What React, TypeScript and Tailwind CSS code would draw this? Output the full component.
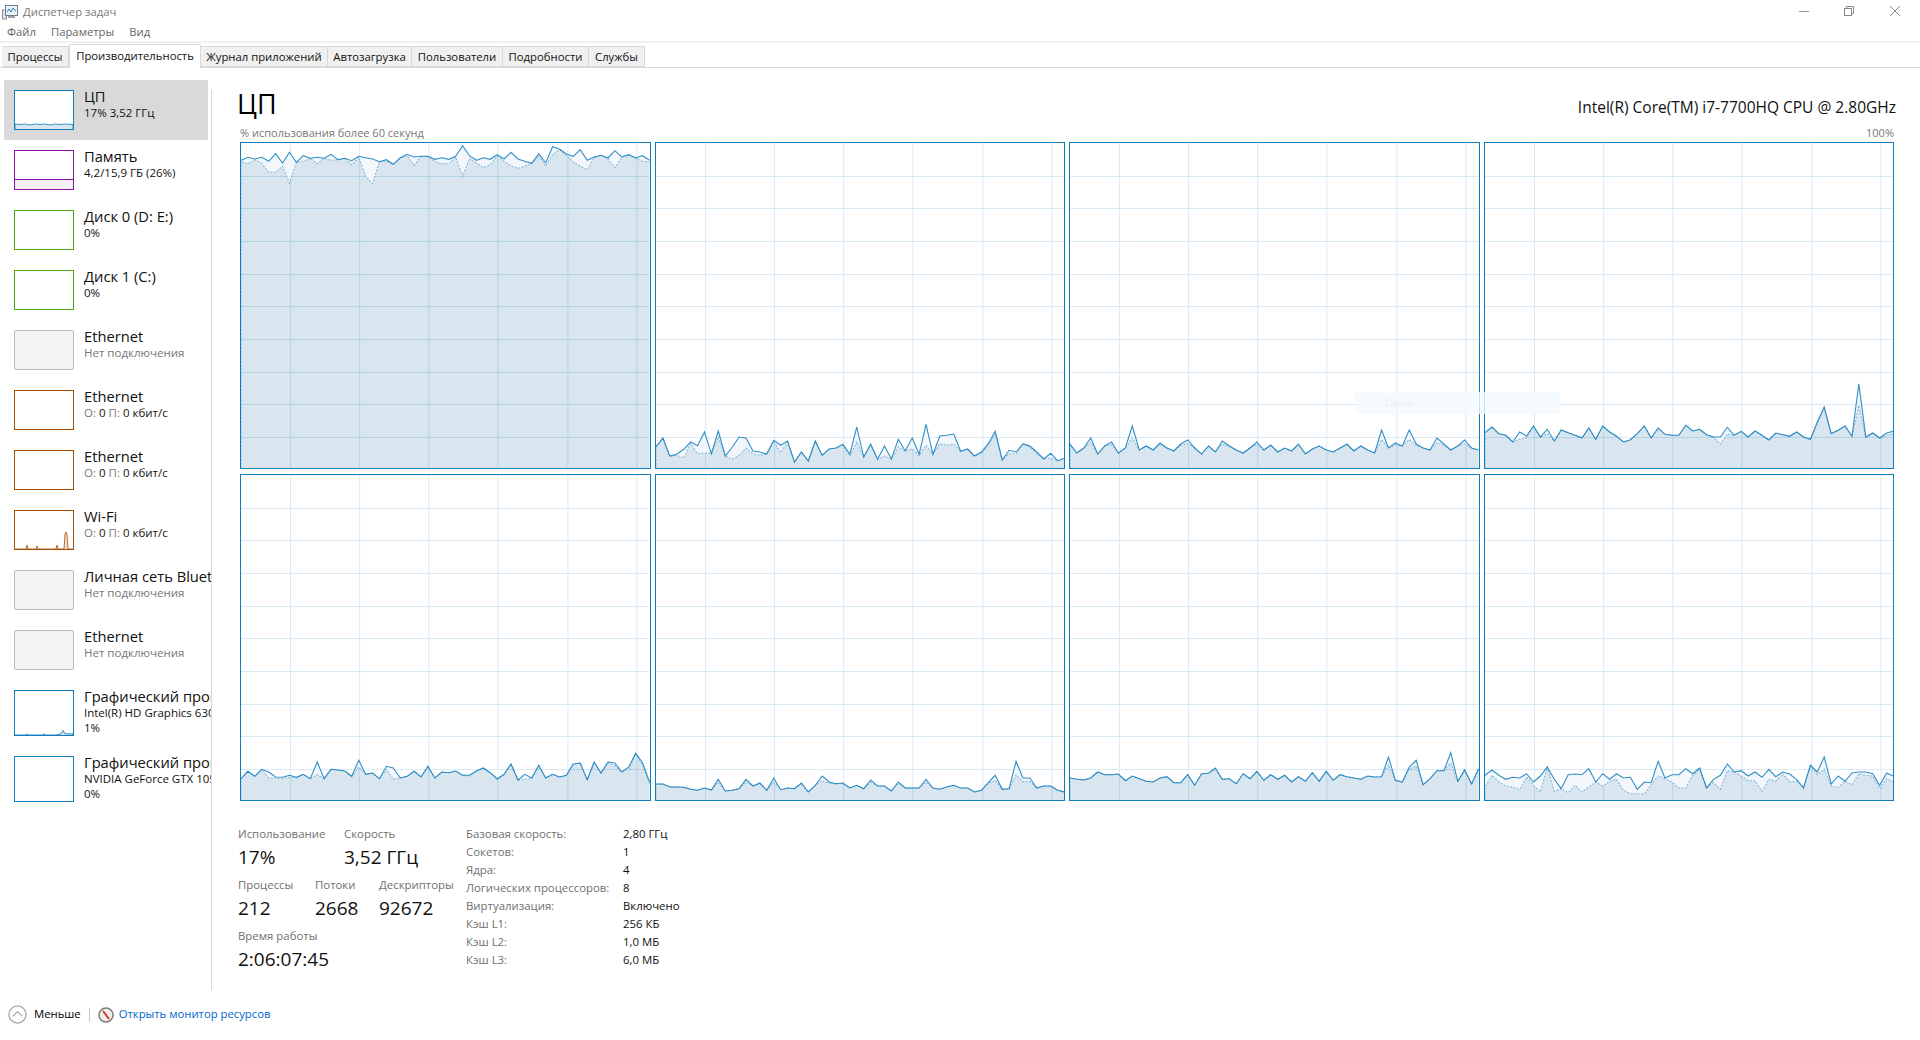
import { ReactNode, useId } from "react";

const W = 408;
const H = 325;
const V_LINES = [49, 118, 187, 256, 326, 395];
const H_LINES = [33, 65, 98, 131, 163, 196, 229, 261, 294];

type Core = { solid: number[]; dashed: number[] };

// values were read off the screenshot, y pixels above the bottom of each panel
const fromY = (base: number, ys: number[]) => ys.map((y) => (base - y) / 3);
const flatten = (vals: number[], cap: number) =>
	vals.map((v) => (v > cap ? cap + (v - cap) * 0.4 : v));

const core3 = [24, 15, 20, 30, 14, 22, 26, 15, 20, 42, 18, 22, 18, 25, 20, 17, 24, 28, 20, 14, 22, 16, 27, 22, 18, 15, 20, 26, 18, 23, 16, 20, 17, 24, 14, 19, 22, 18, 16, 20, 24, 17, 22, 18, 15, 38, 20, 25, 22, 38, 24, 20, 18, 30, 24, 18, 22, 28, 20, 18];
const core6 = fromY(184, [136, 136, 145, 145, 146, 152, 155, 148, 154, 122, 157, 155, 150, 122, 142, 133, 155, 118, 153, 148, 150, 133, 160, 140, 112, 130, 135, 133, 148, 140, 150, 124, 142, 142, 157, 130, 148, 148, 148, 122, 148, 152, 145, 140, 148, 148, 160, 155, 132, 110, 152, 150, 68, 118, 118, 148, 142, 142, 155, 160]);
const core7 = fromY(184, [118, 122, 124, 118, 100, 108, 108, 106, 126, 112, 120, 128, 130, 118, 114, 132, 132, 108, 140, 105, 104, 88, 122, 120, 135, 105, 120, 98, 125, 108, 122, 110, 130, 114, 128, 102, 128, 98, 125, 108, 114, 118, 122, 112, 115, 114, 55, 125, 130, 85, 65, 138, 120, 96, 96, 42, 128, 94, 136, 90]);

const CORES: Core[] = [
	{
		solid: fromY(1005, [82, 73, 78, 73, 85, 62, 90, 58, 88, 68, 76, 73, 76, 64, 80, 76, 83, 70, 74, 78, 86, 80, 94, 74, 64, 72, 70, 70, 79, 74, 79, 70, 38, 68, 82, 74, 79, 65, 78, 58, 78, 85, 91, 62, 90, 41, 48, 63, 70, 50, 82, 72, 67, 75, 53, 72, 65, 75, 68, 82]),
		dashed: fromY(1005, [85, 93, 80, 90, 118, 118, 100, 150, 88, 85, 76, 92, 76, 82, 80, 76, 96, 72, 130, 152, 86, 85, 94, 76, 68, 97, 70, 70, 85, 92, 92, 72, 130, 76, 90, 104, 95, 70, 85, 98, 106, 100, 91, 68, 100, 65, 50, 66, 88, 100, 110, 74, 67, 78, 104, 74, 65, 75, 85, 86]),
	},
	{
		solid: fromY(208, [145, 118, 172, 167, 152, 130, 141, 100, 165, 97, 172, 146, 115, 118, 157, 160, 166, 125, 140, 127, 190, 160, 187, 127, 170, 151, 148, 137, 167, 85, 175, 137, 182, 142, 181, 122, 157, 118, 167, 77, 167, 112, 110, 106, 158, 151, 172, 160, 135, 98, 184, 155, 160, 136, 142, 160, 181, 164, 186, 179]),
		dashed: fromY(208, [145, 118, 172, 170, 178, 135, 165, 163, 165, 115, 172, 182, 170, 148, 165, 170, 166, 128, 162, 130, 190, 160, 187, 127, 170, 151, 148, 140, 172, 130, 175, 137, 182, 172, 181, 145, 157, 150, 170, 140, 167, 135, 140, 136, 158, 151, 172, 163, 140, 105, 184, 165, 165, 136, 145, 165, 181, 178, 186, 179]),
	},
	{ solid: core3, dashed: flatten(core3, 22) },
	{
		solid: fromY(298, [192, 175, 195, 200, 220, 190, 202, 172, 205, 182, 217, 184, 192, 200, 208, 178, 212, 172, 190, 203, 220, 213, 195, 172, 208, 178, 197, 200, 200, 170, 187, 182, 198, 205, 205, 176, 200, 188, 205, 187, 200, 214, 193, 198, 203, 190, 205, 212, 160, 115, 195, 185, 172, 203, 45, 205, 193, 208, 193, 188]),
		dashed: fromY(298, [192, 175, 195, 200, 220, 212, 205, 172, 205, 195, 217, 184, 192, 200, 208, 178, 212, 172, 190, 203, 220, 213, 195, 172, 208, 178, 197, 200, 200, 170, 187, 182, 198, 205, 227, 196, 200, 188, 205, 187, 200, 214, 193, 198, 203, 190, 205, 212, 165, 120, 195, 185, 172, 203, 110, 205, 193, 208, 200, 195]),
	},
	{
		solid: fromY(184, [120, 98, 113, 92, 100, 115, 116, 110, 116, 107, 120, 70, 120, 92, 94, 97, 113, 65, 107, 103, 120, 83, 88, 118, 113, 98, 115, 83, 118, 100, 102, 97, 110, 110, 97, 88, 102, 121, 107, 76, 124, 107, 118, 80, 118, 107, 115, 110, 76, 73, 123, 70, 103, 70, 73, 100, 85, 44, 72, 130]),
		dashed: fromY(184, [120, 98, 113, 92, 118, 118, 120, 116, 118, 107, 120, 108, 120, 92, 94, 97, 113, 85, 107, 103, 120, 92, 122, 118, 113, 98, 115, 83, 118, 100, 102, 97, 110, 112, 97, 88, 102, 121, 107, 76, 124, 122, 120, 80, 118, 107, 115, 110, 76, 73, 123, 72, 103, 72, 80, 100, 92, 44, 80, 135]),
	},
	{ solid: core6, dashed: flatten(core6, 16) },
	{ solid: core7, dashed: flatten(core7, 30) },
	{
		solid: fromY(184, [110, 94, 110, 122, 116, 118, 105, 130, 112, 85, 122, 150, 108, 106, 108, 90, 130, 105, 122, 105, 118, 116, 152, 130, 132, 68, 118, 108, 108, 90, 105, 88, 148, 122, 110, 76, 100, 96, 112, 100, 116, 92, 114, 100, 106, 122, 148, 80, 100, 55, 136, 112, 128, 103, 100, 100, 105, 140, 103, 112]),
		dashed: fromY(184, [145, 110, 130, 142, 145, 153, 115, 140, 160, 85, 158, 150, 162, 140, 160, 145, 130, 142, 128, 122, 155, 165, 165, 166, 138, 112, 120, 130, 148, 148, 110, 90, 148, 132, 152, 96, 100, 112, 126, 126, 158, 122, 128, 105, 130, 128, 145, 80, 108, 92, 142, 146, 128, 138, 105, 110, 112, 150, 120, 130]),
	},
];

function toPoints(vals: number[]) {
	return vals
		.map((v, i) => `${((i * W) / (vals.length - 1)).toFixed(1)},${(H - v).toFixed(1)}`)
		.join(" ");
}

function CorePanel({ core }: { core: Core }) {
	const clip = useId();
	const solid = toPoints(core.solid);
	const dashed = toPoints(core.dashed);
	const gridLines = (stroke: string) => (
		<g stroke={stroke} strokeWidth="1">
			{V_LINES.map((x) => (
				<line key={x} x1={x + 0.5} x2={x + 0.5} y1="0" y2={H} />
			))}
			{H_LINES.map((y) => (
				<line key={y} x1="0" x2={W} y1={y + 0.5} y2={y + 0.5} />
			))}
		</g>
	);

	return (
		<div className="h-[327px] border border-[#117dbb] bg-white">
			<svg viewBox={`0 0 ${W} ${H}`} preserveAspectRatio="none" className="block h-full w-full">
				<defs>
					<clipPath id={clip}>
						<polygon points={`0,${H} ${dashed} ${W},${H}`} />
					</clipPath>
				</defs>
				{gridLines("#d9eaf4")}
				<polygon points={`0,${H} ${solid} ${W},${H}`} fill="#f1f6fb" fillOpacity="0.85" />
				<polygon points={`0,${H} ${dashed} ${W},${H}`} fill="#d9e6f0" />
				<g clipPath={`url(#${clip})`}>{gridLines("#b4d2e6")}</g>
				<polyline
					points={`0,${H} ${dashed}`}
					fill="none"
					stroke="#117dbb"
					strokeOpacity="0.5"
					strokeWidth="1"
					strokeDasharray="2 1.5"
				/>
				<polyline points={solid} fill="none" stroke="#117dbb" strokeOpacity="0.85" strokeWidth="1.1" />
			</svg>
		</div>
	);
}

function Thumb({
	border,
	muted,
	tall,
	children,
}: {
	border?: string;
	muted?: boolean;
	tall?: boolean;
	children?: ReactNode;
}) {
	return (
		<div
			className={`w-[60px] shrink-0 overflow-hidden border ${tall ? "h-[46px]" : "h-[40px]"} ${
				muted ? "rounded-[2px] border-[#bcbcbc] bg-[#f4f4f4]" : "bg-white"
			}`}
			style={border ? { borderColor: border } : undefined}
		>
			{children}
		</div>
	);
}

function ThumbLine({ points, stroke, fill }: { points: string; stroke: string; fill: string }) {
	return (
		<svg viewBox="0 0 58 38" preserveAspectRatio="none" className="block h-full w-full">
			<polyline points={points} fill={fill} stroke={stroke} strokeWidth="0.8" />
		</svg>
	);
}

function Net() {
	return (
		<>
			<span className="text-[#7a7a7a]">О:</span> 0 <span className="text-[#7a7a7a]">П:</span> 0 кбит/с
		</>
	);
}

function SideItem({
	title,
	sub,
	sub2,
	thumb,
	selected,
	mutedSub,
	tall,
}: {
	title: string;
	sub: ReactNode;
	sub2?: string;
	thumb: ReactNode;
	selected?: boolean;
	mutedSub?: boolean;
	tall?: boolean;
}) {
	return (
		<div
			className={`ml-[4px] flex gap-[10px] pl-[10px] pt-[10px] ${tall ? "h-[66px]" : "h-[60px]"} ${
				selected ? "w-[204px] bg-[#d9d9d9]" : "w-[207px]"
			}`}
		>
			{thumb}
			<div className="-mt-[1px] min-w-0 whitespace-nowrap">
				<div className="h-[16px] text-[14.7px] leading-[15px] text-[#111]">{title}</div>
				<div className={`text-[11.5px] leading-[15px] ${mutedSub ? "text-[#777]" : "text-[#111]"}`}>{sub}</div>
				{sub2 && <div className="text-[11.5px] leading-[15px] text-[#111]">{sub2}</div>}
			</div>
		</div>
	);
}

const TABS = [
	{ name: "Процессы", w: "w-[67px]" },
	{ name: "Производительность", w: "w-[132px]", active: true },
	{ name: "Журнал приложений", w: "w-[127px]" },
	{ name: "Автозагрузка", w: "w-[84px]" },
	{ name: "Пользователи", w: "w-[91px]" },
	{ name: "Подробности", w: "w-[86px]" },
	{ name: "Службы", w: "w-[56px]" },
];

const SPECS = [
	["Базовая скорость:", "2,80 ГГц"],
	["Сокетов:", "1"],
	["Ядра:", "4"],
	["Логических процессоров:", "8"],
	["Виртуализация:", "Включено"],
	["Кэш L1:", "256 КБ"],
	["Кэш L2:", "1,0 МБ"],
	["Кэш L3:", "6,0 МБ"],
];

function Stat({ label, value, className }: { label: string; value: string; className?: string }) {
	return (
		<div className={className}>
			<div className="h-[16px] whitespace-nowrap text-[11.4px] leading-[16px] text-[#707070]">{label}</div>
			<div className="mt-[1px] h-[28px] whitespace-nowrap text-[19px] leading-[28px] text-[#111]">{value}</div>
		</div>
	);
}

export default function App() {
	return (
		<div className="relative flex h-screen w-full flex-col overflow-hidden bg-white font-['Open_Sans',sans-serif] text-[12px]">
			{/* title bar */}
			<div className="flex h-[24px] items-center justify-between">
				<div className="flex items-center pl-[2px]">
					<svg viewBox="0 0 16 16" className="h-[16px] w-[16px]">
						<rect x="0.5" y="6" width="4" height="9" fill="#dfe3e6" stroke="#8a9299" />
						<rect x="3.5" y="1.5" width="12" height="10" fill="#eaf3fa" stroke="#6d7f8c" />
						<polyline points="5,8 7,5 9,8 11,4 14,7" fill="none" stroke="#2c7fb8" strokeWidth="1" />
						<rect x="6" y="12" width="7" height="2" fill="#9aa5ad" />
					</svg>
					<span className="ml-[5px] text-[11.3px] text-[#7a7a7a]">Диспетчер задач</span>
				</div>
				<div className="-mt-[3px] flex items-center">
					<svg viewBox="0 0 12 12" className="mr-[33px] h-[12px] w-[12px]" fill="none" stroke="#9a9a9a">
						<line x1="1" y1="6.5" x2="11" y2="6.5" />
					</svg>
					<svg viewBox="0 0 12 12" className="mr-[34px] h-[12px] w-[12px]" fill="none" stroke="#8a8a8a">
						<rect x="1.5" y="3.5" width="7" height="7" />
						<polyline points="3.5,3.5 3.5,1.5 10.5,1.5 10.5,8.5 8.5,8.5" />
					</svg>
					<svg viewBox="0 0 12 12" className="mr-[19px] h-[12px] w-[12px]" fill="none" stroke="#8a8a8a">
						<line x1="1" y1="1" x2="11" y2="11" />
						<line x1="11" y1="1" x2="1" y2="11" />
					</svg>
				</div>
			</div>

			{/* menu */}
			<div className="flex h-[17px] items-center gap-[15px] pl-[7px] text-[11.3px] text-[#666]">
				<span>Файл</span>
				<span>Параметры</span>
				<span>Вид</span>
			</div>
			<div className="h-[2px] bg-[#f0f0f0]" />

			{/* tabs */}
			<div className="flex h-[25px] items-end border-b border-[#d9d9d9] pl-[2px]">
				{TABS.map((tab) =>
					tab.active ? (
						<div
							key={tab.name}
							className={`${tab.w} -mb-[1px] flex h-[24px] items-center justify-center border border-b-0 border-[#d9d9d9] bg-white text-[11.3px] text-[#111]`}
						>
							{tab.name}
						</div>
					) : (
						<div
							key={tab.name}
							className={`${tab.w} flex h-[21px] items-center justify-center border-y border-r border-[#d9d9d9] bg-[#f0f0f0] pt-[2px] text-[11.3px] text-[#111]`}
						>
							{tab.name}
						</div>
					),
				)}
			</div>

			{/* body */}
			<div className="flex h-[922px]">
				<div className="w-[211px] overflow-hidden pt-[12px]">
					<SideItem
						selected
						title="ЦП"
						sub="17% 3,52 ГГц"
						thumb={
							<Thumb border="#117dbb">
								<ThumbLine
									stroke="#117dbb"
									fill="#d9e6f0"
									points="0,38 0,33 5,33.5 10,33 15,34 20,33 25,33.5 30,33 35,34 40,33 45,33.5 50,33 58,33.5 58,38"
								/>
							</Thumb>
						}
					/>
					<SideItem
						title="Память"
						sub="4,2/15,9 ГБ (26%)"
						thumb={
							<Thumb border="#8b12ae">
								<div className="mt-[28px] h-[10px] border-t border-[#8b12ae] bg-[#f4f2f4]" />
							</Thumb>
						}
					/>
					<SideItem title="Диск 0 (D: E:)" sub="0%" thumb={<Thumb border="#4da60c" />} />
					<SideItem title="Диск 1 (C:)" sub="0%" thumb={<Thumb border="#4da60c" />} />
					<SideItem title="Ethernet" sub="Нет подключения" mutedSub thumb={<Thumb muted />} />
					<SideItem title="Ethernet" sub={<Net />} thumb={<Thumb border="#a74f01" />} />
					<SideItem title="Ethernet" sub={<Net />} thumb={<Thumb border="#a74f01" />} />
					<SideItem
						title="Wi-Fi"
						sub={<Net />}
						thumb={
							<Thumb border="#a74f01">
								<ThumbLine
									stroke="#a74f01"
									fill="#f3dfcf"
									points="0,38 11,38 12,34 13,38 21,38 22,35 23,38 41,38 42,34 43,38 49,38 50,23 51,21 52,24 53,38 58,38"
								/>
							</Thumb>
						}
					/>
					<SideItem title="Личная сеть Bluetooth" sub="Нет подключения" mutedSub thumb={<Thumb muted />} />
					<SideItem title="Ethernet" sub="Нет подключения" mutedSub thumb={<Thumb muted />} />
					<SideItem
						tall
						title="Графический процессор 0"
						sub="Intel(R) HD Graphics 630"
						sub2="1%"
						thumb={
							<Thumb tall border="#117dbb">
								<ThumbLine
									stroke="#117dbb"
									fill="#d9e6f0"
									points="0,38 11,38 12,37 13,38 28,38 29,37 30,38 41,38 46,37 48,34 50,37 58,37 58,38"
								/>
							</Thumb>
						}
					/>
					<SideItem tall title="Графический процессор 1" sub="NVIDIA GeForce GTX 1050" sub2="0%" thumb={<Thumb tall border="#117dbb" />} />
				</div>
				<div className="mt-[22px] w-px bg-[#d9d9d9]" />

				<div className="flex-1 pl-[28px] pr-[26px]">
					<div className="mt-[18px] flex h-[36px] items-center justify-between">
						<span className="-ml-[3px] text-[27px] leading-[36px] text-black">ЦП</span>
						<span className="-mr-[2px] pt-[8px] text-[15.5px] text-[#111]">Intel(R) Core(TM) i7-7700HQ CPU @ 2.80GHz</span>
					</div>
					<div className="mt-[3px] flex h-[16px] items-center justify-between text-[11px] text-[#777]">
						<span>% использования более 60 секунд</span>
						<span>100%</span>
					</div>
					<div className="mt-[1px] grid grid-cols-4 gap-x-[4px] gap-y-[5px]">
						{CORES.map((core, i) => (
							<CorePanel key={i} core={core} />
						))}
					</div>

					<div className="mt-[25px] flex">
						<div className="-ml-[2px] flex w-[228px] flex-col gap-y-[6px]">
							<div className="flex">
								<Stat label="Использование" value="17%" className="w-[106px]" />
								<Stat label="Скорость" value="3,52 ГГц" />
							</div>
							<div className="flex">
								<Stat label="Процессы" value="212" className="w-[77px]" />
								<Stat label="Потоки" value="2668" className="w-[64px]" />
								<Stat label="Дескрипторы" value="92672" />
							</div>
							<Stat label="Время работы" value="2:06:07:45" />
						</div>
						<div className="-mt-[1px] grid grid-cols-[157px_auto] auto-rows-[18px] items-center text-[11.4px] leading-[18px]">
							{SPECS.map(([k, v]) => (
								<div key={k} className="contents">
									<span className="whitespace-nowrap text-[#707070]">{k}</span>
									<span className="text-[#111]">{v}</span>
								</div>
							))}
						</div>
					</div>
				</div>
			</div>

			{/* footer */}
			<div className="flex flex-1 items-center pl-[8px] pb-[1px] text-[11.3px]">
				<svg viewBox="0 0 20 20" className="h-[19px] w-[19px]" fill="none">
					<circle cx="10" cy="10" r="9" stroke="#a6a6a6" strokeWidth="1.3" />
					<polyline points="5,12 10,7 15,12" stroke="#a6a6a6" strokeWidth="1.3" />
				</svg>
				<span className="ml-[7px] text-black">Меньше</span>
				<div className="ml-[8px] h-[14px] w-px bg-[#c8c8c8]" />
				<svg viewBox="0 0 16 16" className="ml-[8px] h-[16px] w-[16px]">
					<circle cx="8" cy="8" r="7" fill="#f2f0ec" stroke="#7a7a7a" strokeWidth="1.5" />
					<line x1="5" y1="4" x2="11" y2="12" stroke="#d22f27" strokeWidth="1.8" />
				</svg>
				<span className="ml-[5px] text-[#0066cc]">Открыть монитор ресурсов</span>
			</div>

			{/* ghost window left over the graphs */}
			<div className="absolute left-[1355px] top-[392px] flex h-[22px] w-[205px] items-center bg-[#f4faff]/80 pl-[30px] text-[11px] text-[#e8eef3]">
				Окно
			</div>
		</div>
	);
}
